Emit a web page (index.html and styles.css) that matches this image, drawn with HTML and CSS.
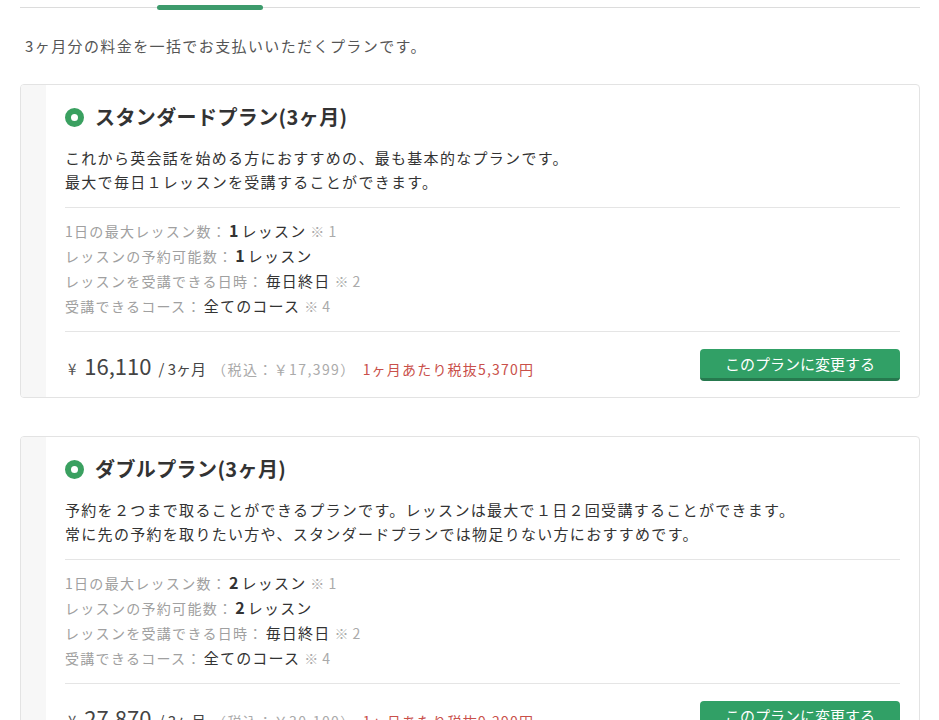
FILE: index.html
```html
<!DOCTYPE html>
<html lang="ja">
<head>
<meta charset="utf-8">
<link rel="stylesheet" href="styles.css">
</head>
<body>
<div class="page">
  <div class="tabs"><span class="tab-active"></span></div>
  <p class="lead">3ヶ月分の料金を一括でお支払いいただくプランです。</p>

  <div class="card">
    <div class="strip"></div>
    <div class="body">
      <h2 class="title"><span class="dot"></span>スタンダードプラン(3ヶ月)</h2>
      <p class="desc">これから英会話を始める方におすすめの、最も基本的なプランです。<br>最大で毎日１レッスンを受講することができます。</p>
      <div class="specs">
        <div class="row"><span class="label">1日の最大レッスン数：</span><span class="val"><b>1</b>レッスン</span><span class="note">※ 1</span></div>
        <div class="row"><span class="label">レッスンの予約可能数：</span><span class="val"><b>1</b>レッスン</span></div>
        <div class="row"><span class="label">レッスンを受講できる日時：</span><span class="val">毎日終日</span><span class="note">※ 2</span></div>
        <div class="row"><span class="label">受講できるコース：</span><span class="val">全てのコース</span><span class="note">※ 4</span></div>
      </div>
      <div class="price-row">
        <div class="price">
          <span class="yen">¥</span><span class="amount">16,110</span><span class="per">/ 3ヶ月</span><span class="tax">（税込：￥17,399）</span><span class="monthly">1ヶ月あたり税抜5,370円</span>
        </div>
        <button class="btn">このプランに変更する</button>
      </div>
    </div>
  </div>

  <div class="card">
    <div class="strip"></div>
    <div class="body">
      <h2 class="title"><span class="dot"></span>ダブルプラン(3ヶ月)</h2>
      <p class="desc">予約を２つまで取ることができるプランです。レッスンは最大で１日２回受講することができます。<br>常に先の予約を取りたい方や、スタンダードプランでは物足りない方におすすめです。</p>
      <div class="specs">
        <div class="row"><span class="label">1日の最大レッスン数：</span><span class="val"><b>2</b>レッスン</span><span class="note">※ 1</span></div>
        <div class="row"><span class="label">レッスンの予約可能数：</span><span class="val"><b>2</b>レッスン</span></div>
        <div class="row"><span class="label">レッスンを受講できる日時：</span><span class="val">毎日終日</span><span class="note">※ 2</span></div>
        <div class="row"><span class="label">受講できるコース：</span><span class="val">全てのコース</span><span class="note">※ 4</span></div>
      </div>
      <div class="price-row">
        <div class="price">
          <span class="yen">¥</span><span class="amount">27,870</span><span class="per">/ 3ヶ月</span><span class="tax">（税込：￥30,100）</span><span class="monthly">1ヶ月あたり税抜9,290円</span>
        </div>
        <button class="btn">このプランに変更する</button>
      </div>
    </div>
  </div>
</div>
</body>
</html>
```
FILE: styles.css
```css
html, body {
  margin: 0;
  padding: 0;
  background: #fff;
}
body {
  font-family: "Noto Sans CJK JP", "Noto Sans", sans-serif;
  color: #333;
}
.page {
  padding: 0 19px 0 20px;
}
.tabs {
  height: 7px;
  border-bottom: 1px solid #dcdcdc;
  display: flex;
  align-items: flex-end;
}
.tab-active {
  display: block;
  margin-left: 137px;
  width: 106px;
  height: 5px;
  margin-bottom: -3px;
  border-radius: 3px;
  background: #3d9b6c;
}
.lead {
  margin: 28px 0 28px 5px;
  font-size: 15px;
  letter-spacing: 1.4px;
  line-height: 20px;
  color: #555;
}
.card {
  display: flex;
  border: 1px solid #e3e3e3;
  border-radius: 4px;
  margin-bottom: 38px;
  overflow: hidden;
}
.strip {
  width: 25px;
  background: #f7f7f7;
  flex: none;
}
.body {
  flex: 1;
  padding: 18px 19px 16px 19px;
}
.title {
  margin: 0;
  display: flex;
  align-items: center;
  font-size: 20px;
  line-height: 28px;
  font-weight: bold;
  letter-spacing: 0.4px;
  color: #333;
}
.dot {
  box-sizing: border-box;
  width: 19px;
  height: 19px;
  border-radius: 50%;
  border: 6px solid #3aa060;
  background: #fff;
  margin-right: 11px;
  flex: none;
}
.desc {
  margin: 15px 0 0 0;
  font-size: 15px;
  letter-spacing: 1.3px;
  line-height: 24px;
  color: #333;
  padding-bottom: 13px;
  border-bottom: 1px solid #e5e5e5;
}
.specs {
  padding: 10px 0 13px;
  border-bottom: 1px solid #e5e5e5;
}
.row {
  line-height: 25px;
  height: 25px;
  display: flex;
  align-items: baseline;
}
.label {
  font-size: 14px;
  letter-spacing: 1.3px;
  color: #a0a0a0;
  margin-right: 2px;
}
.val {
  font-size: 15px;
  letter-spacing: 1.2px;
  color: #333;
}
.val b {
  font-size: 16px;
  margin-right: 3px;
  letter-spacing: 0;
}
.note {
  font-size: 14px;
  color: #aaa;
  margin-left: 4px;
  letter-spacing: 0.5px;
  white-space: pre;
}
.price-row {
  display: flex;
  justify-content: space-between;
  align-items: center;
  padding-top: 17px;
}
.price {
  display: flex;
  align-items: baseline;
  padding-left: 3px;
}
.yen {
  font-size: 15px;
  color: #555;
  margin-right: 8px;
}
.amount {
  font-size: 22px;
  color: #444;
  margin-right: 7px;
}
.per {
  font-size: 15px;
  color: #444;
  margin-right: 6px;
}
.tax {
  font-size: 14px;
  color: #aaa;
  letter-spacing: 1.4px;
  margin-right: 7px;
}
.monthly {
  font-size: 14px;
  letter-spacing: 1.2px;
  color: #c9504a;
}
.btn {
  box-sizing: border-box;
  width: 200px;
  height: 32px;
  border: 0;
  border-bottom: 3px solid #26794e;
  border-radius: 4px;
  background: #31a066;
  color: #fff;
  font-family: "Noto Sans CJK JP", "Noto Sans", sans-serif;
  font-size: 15px;
  padding: 0;
  line-height: 29px;
}
```
